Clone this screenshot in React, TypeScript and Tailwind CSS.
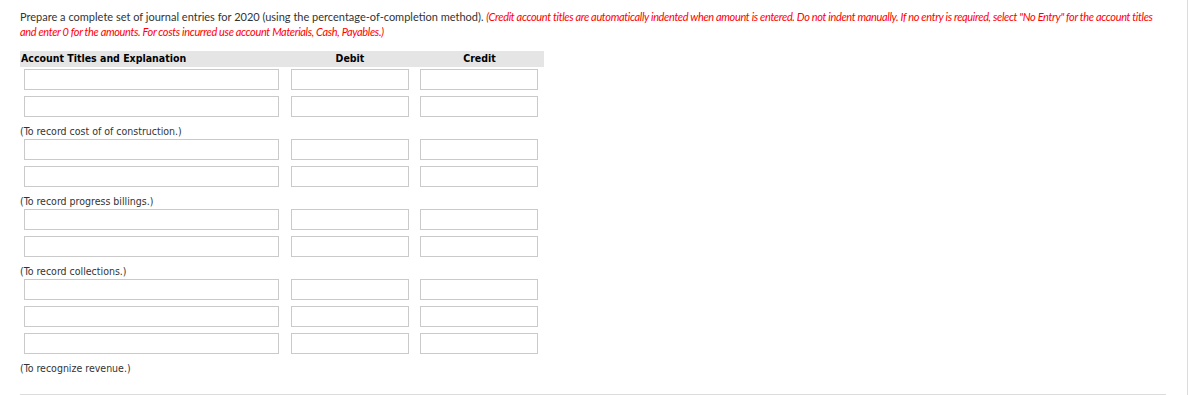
const GROUPS: { rows: number; note: string }[] = [
  { rows: 2, note: "(To record cost of of construction.)" },
  { rows: 2, note: "(To record progress billings.)" },
  { rows: 2, note: "(To record collections.)" },
  { rows: 3, note: "(To recognize revenue.)" },
];

const tableFont = "font-['DejaVu_Sans_Condensed','DejaVu_Sans',Tahoma,sans-serif]";

function EntryRow() {
  const box = "h-[21px] border border-[#cacaca] bg-white outline-none";
  return (
    <div className="mb-[6px] flex">
      <input type="text" className={`ml-1 w-[255px] ${box}`} />
      <input type="text" className={`ml-3 w-[118px] ${box}`} />
      <input type="text" className={`ml-[11px] w-[118px] ${box}`} />
    </div>
  );
}

export default function App() {
  return (
    <div className="h-[395px] w-[1188px] border-r border-[#dcdcdc] bg-white">
      <div className="pl-5 pr-[21px] pt-[9px]">
        <p className="font-['Lato',sans-serif] text-[11px] leading-[15px] text-[#333]">
          Prepare a complete set of journal entries for 2020 (using the percentage-of-completion method).{" "}
          <i className="tracking-[-0.35px] text-[#f00]">
            (Credit account titles are automatically indented when amount is entered. Do not indent manually. If no
            entry is required, select "No Entry" for the account titles and enter 0 for the amounts. For costs
            incurred use account Materials, Cash, Payables.)
          </i>
        </p>

        <div className={`mt-3 w-[524px] ${tableFont} text-[10.5px] text-[#333]`}>
          <div className="mb-[2px] flex h-4 items-center bg-[#e5e5e5] font-bold text-black">
            <div className="w-[265px] pl-px">Account Titles and Explanation</div>
            <div className="w-[130px] text-center">Debit</div>
            <div className="w-[129px] text-center">Credit</div>
          </div>
          {GROUPS.map((g) => (
            <div key={g.note}>
              {Array.from({ length: g.rows }).map((_, i) => (
                <EntryRow key={i} />
              ))}
              <div className="h-4 leading-4">{g.note}</div>
            </div>
          ))}
        </div>

        <div className="mt-[18px] border-b border-[#dcdcdc]" />
      </div>
    </div>
  );
}
